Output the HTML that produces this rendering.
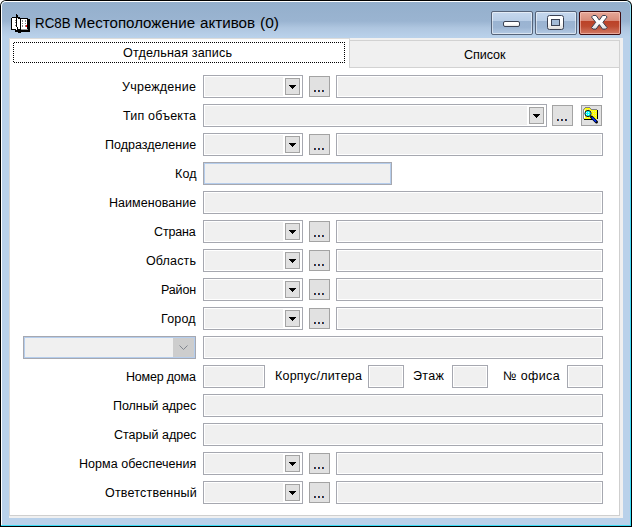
<!DOCTYPE html>
<html><head><meta charset="utf-8">
<style>
*{box-sizing:border-box}
html,body{margin:0;padding:0;width:632px;height:527px;overflow:hidden;background:#fff;font-family:"Liberation Sans",sans-serif}
#win{position:absolute;left:0;top:0;width:632px;height:527px;border-radius:6px 6px 0 0;background:#000;overflow:hidden}
#frm{position:absolute;left:1px;top:1px;width:630px;height:525px;border-radius:5px 5px 0 0;background:linear-gradient(#a0e4f6,#50d8f4 60px,#3adcf6);}
#frm2{position:absolute;left:0;top:0;width:629px;height:524px;border-radius:5px 5px 0 0;background:#fff}
#frm3{position:absolute;left:1px;top:1px;width:628px;height:523px;border-radius:4px 4px 0 0;background:linear-gradient(#94afcc 0px,#9ab4d1 19px,#afc6e0 26px,#b9d1ea 35px,#b9d1ea 100%)}
.ttl{position:absolute;top:14px;font-size:15.5px;color:#000;white-space:nowrap;transform-origin:0 0}
.tb{position:absolute;top:11px;width:42px;height:24px;border:1px solid #56647a;border-radius:2px;background:linear-gradient(#c6d8ee 0%,#b8cde6 41%,#9ab3d1 42%,#9cb5d3 70%,#b4cae4 100%);box-shadow:inset 0 0 0 1px rgba(255,255,255,0.5)}
.tbc{border-color:#3f0c10;background:linear-gradient(#e6a898 0%,#d88a78 41%,#bb4228 42%,#bd4a30 65%,#d27a66 100%);box-shadow:inset 0 0 0 1px rgba(255,210,200,0.55)}
#client{position:absolute;left:9px;top:38px;width:614px;height:480px;background:#f0f0f0}
#page{position:absolute;left:10px;top:68px;width:610px;height:448px;background:#fff;border-right:1px solid #cfcfcf;border-bottom:1px solid #cfcfcf}
#tab1{position:absolute;left:10px;top:39px;width:339px;height:30px;background:#fff}
#tab2{position:absolute;left:349px;top:40px;width:271px;height:28px;background:#f0f0f0;border:1px solid #d2d2d2}
.fh{position:absolute;height:1px;background:repeating-linear-gradient(to right,transparent 0 1px,#000 1px 2px)}
.fv{position:absolute;width:1px;background:repeating-linear-gradient(to bottom,transparent 0 1px,#000 1px 2px)}
.tt{position:absolute;font-size:12.6px;white-space:nowrap;color:#000}
.lb{position:absolute;font-size:12.5px;line-height:15px;padding-top:5px;height:23px;white-space:nowrap;color:#000}
.lbi{position:absolute;font-size:12.5px;line-height:15px;padding-top:4px;height:23px;white-space:nowrap;color:#000}
.ed{position:absolute;height:23px;border:1px solid #a6a8b0;background:#f0f0f0;box-shadow:inset 0 0 0 1px #fff}
.cb{position:absolute;height:23px;border:1px solid #a6a8b0;background:#fff}
.ebl{box-shadow:inset 0 0 0 1px #b5cdec}
.cbf{position:absolute;left:1px;top:1px;height:19px;background:#f0f0f0}
.cbb{position:absolute;right:2px;top:2px;width:15px;height:17px;border:1px solid #a3a3a3;background:#e1e1e1}
.cbb i{position:absolute;left:3px;top:6px;width:0;height:0;border-left:3.5px solid transparent;border-right:3.5px solid transparent;border-top:4px solid #000}
.db{position:absolute;width:21px;height:21px;border:1px solid #a3a3a3;background:#e1e1e1}
.dt{position:absolute;top:13px;width:2px;height:2px;background:linear-gradient(to right,#6a2a08 0 1px,#0a4a9a 1px 2px)}
.dcb{position:absolute;left:149px;top:1px;width:21px;height:19px;background:#cdcdcd}
</style></head><body>
<div id="win"><div id="frm"><div id="frm2"><div id="frm3"></div></div></div></div>
<div class="ttl" style="left:35px;transform:scaleX(0.86)">RC8B</div><div class="ttl" style="left:74px;transform:scaleX(0.975)">Местоположение</div><div class="ttl" style="left:200px;transform:scaleX(0.98)">активов</div><div class="ttl" style="left:260px">(0)</div>
<div class="tb" style="left:491px"><svg width="42" height="24" style="position:absolute;left:-1px;top:-1px"><rect x="12.5" y="10.5" width="16" height="5" rx="1.5" fill="url(#wg)" stroke="#3b4254"/></svg></div>
<div class="tb" style="left:535px"><svg width="42" height="24" style="position:absolute;left:-1px;top:-1px"><defs><linearGradient id="wg" x1="0" y1="0" x2="0" y2="1"><stop offset="0" stop-color="#fff"/><stop offset="0.5" stop-color="#fff"/><stop offset="1" stop-color="#dcdcdc"/></linearGradient></defs><rect x="12.5" y="4.5" width="16" height="14" rx="2" fill="url(#wg)" stroke="#3b4254"/><rect x="16.5" y="8.5" width="8" height="6" fill="#a3bbd7" stroke="#3b4254"/></svg></div>
<div class="tb tbc" style="left:579px"><svg width="42" height="24" style="position:absolute;left:-1px;top:-1px"><polygon transform="translate(12.5,4.5)" points="0,1.5 1.5,0 4.6,0 7.8,4.6 11,0 14.1,0 15.6,1.5 11.4,6.8 15.6,12.1 14.1,13.6 11,13.6 7.8,9.1 4.6,13.6 1.5,13.6 0,12.1 4.2,6.8" fill="url(#wg)" stroke="#3b3f50" stroke-linejoin="round"/></svg></div>
<svg id="icon" width="19" height="19" style="position:absolute;left:11px;top:14px" shape-rendering="crispEdges"><rect x="5" y="0" width="1" height="1" fill="#000"/><rect x="5" y="1" width="2" height="1" fill="#000"/><rect x="5" y="2" width="2" height="1" fill="#000"/><rect x="1" y="3" width="8" height="1" fill="#000"/><rect x="0" y="4" width="1" height="1" fill="#000"/><rect x="1" y="4" width="4" height="1" fill="#fff"/><rect x="5" y="4" width="1" height="1" fill="#000"/><rect x="6" y="4" width="1" height="1" fill="#fff"/><rect x="7" y="4" width="10" height="1" fill="#000"/><rect x="0" y="5" width="1" height="1" fill="#000"/><rect x="1" y="5" width="4" height="1" fill="#fff"/><rect x="5" y="5" width="1" height="1" fill="#000"/><rect x="6" y="5" width="3" height="1" fill="#fff"/><rect x="9" y="5" width="1" height="1" fill="#000"/><rect x="10" y="5" width="6" height="1" fill="#fff"/><rect x="16" y="5" width="3" height="1" fill="#000"/><rect x="0" y="6" width="1" height="1" fill="#000"/><rect x="1" y="6" width="3" height="1" fill="#fff"/><rect x="4" y="6" width="1" height="1" fill="#808080"/><rect x="5" y="6" width="1" height="1" fill="#000"/><rect x="6" y="6" width="3" height="1" fill="#fff"/><rect x="9" y="6" width="1" height="1" fill="#000"/><rect x="10" y="6" width="1" height="1" fill="#fff"/><rect x="11" y="6" width="1" height="1" fill="#808080"/><rect x="12" y="6" width="2" height="1" fill="#fff"/><rect x="14" y="6" width="1" height="1" fill="#808080"/><rect x="15" y="6" width="1" height="1" fill="#fff"/><rect x="16" y="6" width="3" height="1" fill="#000"/><rect x="0" y="7" width="1" height="1" fill="#000"/><rect x="1" y="7" width="4" height="1" fill="#fff"/><rect x="5" y="7" width="1" height="1" fill="#000"/><rect x="6" y="7" width="3" height="1" fill="#fff"/><rect x="9" y="7" width="1" height="1" fill="#000"/><rect x="10" y="7" width="1" height="1" fill="#fff"/><rect x="11" y="7" width="1" height="1" fill="#808080"/><rect x="12" y="7" width="2" height="1" fill="#fff"/><rect x="14" y="7" width="1" height="1" fill="#808080"/><rect x="15" y="7" width="1" height="1" fill="#fff"/><rect x="16" y="7" width="3" height="1" fill="#000"/><rect x="0" y="8" width="1" height="1" fill="#000"/><rect x="1" y="8" width="3" height="1" fill="#fff"/><rect x="4" y="8" width="1" height="1" fill="#808080"/><rect x="5" y="8" width="1" height="1" fill="#000"/><rect x="6" y="8" width="3" height="1" fill="#fff"/><rect x="9" y="8" width="1" height="1" fill="#000"/><rect x="10" y="8" width="6" height="1" fill="#fff"/><rect x="16" y="8" width="3" height="1" fill="#000"/><rect x="0" y="9" width="1" height="1" fill="#000"/><rect x="1" y="9" width="4" height="1" fill="#fff"/><rect x="5" y="9" width="1" height="1" fill="#000"/><rect x="6" y="9" width="3" height="1" fill="#fff"/><rect x="9" y="9" width="1" height="1" fill="#000"/><rect x="10" y="9" width="1" height="1" fill="#fff"/><rect x="11" y="9" width="1" height="1" fill="#808080"/><rect x="12" y="9" width="2" height="1" fill="#fff"/><rect x="14" y="9" width="1" height="1" fill="#808080"/><rect x="15" y="9" width="1" height="1" fill="#fff"/><rect x="16" y="9" width="3" height="1" fill="#000"/><rect x="0" y="10" width="1" height="1" fill="#000"/><rect x="1" y="10" width="4" height="1" fill="#fff"/><rect x="5" y="10" width="1" height="1" fill="#000"/><rect x="6" y="10" width="3" height="1" fill="#fff"/><rect x="9" y="10" width="1" height="1" fill="#000"/><rect x="10" y="10" width="6" height="1" fill="#fff"/><rect x="16" y="10" width="3" height="1" fill="#000"/><rect x="0" y="11" width="1" height="1" fill="#000"/><rect x="1" y="11" width="3" height="1" fill="#fff"/><rect x="4" y="11" width="1" height="1" fill="#808080"/><rect x="5" y="11" width="1" height="1" fill="#000"/><rect x="6" y="11" width="3" height="1" fill="#fff"/><rect x="9" y="11" width="1" height="1" fill="#000"/><rect x="10" y="11" width="1" height="1" fill="#fff"/><rect x="11" y="11" width="1" height="1" fill="#808080"/><rect x="12" y="11" width="2" height="1" fill="#fff"/><rect x="14" y="11" width="1" height="1" fill="#808080"/><rect x="15" y="11" width="1" height="1" fill="#ff0000"/><rect x="16" y="11" width="3" height="1" fill="#000"/><rect x="0" y="12" width="1" height="1" fill="#000"/><rect x="1" y="12" width="4" height="1" fill="#fff"/><rect x="5" y="12" width="1" height="1" fill="#000"/><rect x="6" y="12" width="3" height="1" fill="#fff"/><rect x="9" y="12" width="1" height="1" fill="#000"/><rect x="10" y="12" width="1" height="1" fill="#fff"/><rect x="11" y="12" width="1" height="1" fill="#808080"/><rect x="12" y="12" width="2" height="1" fill="#fff"/><rect x="14" y="12" width="1" height="1" fill="#808080"/><rect x="15" y="12" width="1" height="1" fill="#ff0000"/><rect x="16" y="12" width="3" height="1" fill="#000"/><rect x="0" y="13" width="1" height="1" fill="#000"/><rect x="1" y="13" width="5" height="1" fill="#fff"/><rect x="6" y="13" width="1" height="1" fill="#000"/><rect x="7" y="13" width="2" height="1" fill="#fff"/><rect x="9" y="13" width="1" height="1" fill="#000"/><rect x="10" y="13" width="6" height="1" fill="#fff"/><rect x="16" y="13" width="3" height="1" fill="#000"/><rect x="0" y="14" width="1" height="1" fill="#000"/><rect x="1" y="14" width="5" height="1" fill="#fff"/><rect x="6" y="14" width="1" height="1" fill="#000"/><rect x="7" y="14" width="2" height="1" fill="#fff"/><rect x="9" y="14" width="1" height="1" fill="#000"/><rect x="10" y="14" width="6" height="1" fill="#fff"/><rect x="16" y="14" width="3" height="1" fill="#000"/><rect x="0" y="15" width="5" height="1" fill="#000"/><rect x="5" y="15" width="1" height="1" fill="#fff"/><rect x="6" y="15" width="4" height="1" fill="#000"/><rect x="10" y="15" width="7" height="1" fill="#909090"/><rect x="17" y="15" width="2" height="1" fill="#000"/><rect x="4" y="16" width="15" height="1" fill="#000"/><rect x="4" y="17" width="15" height="1" fill="#000"/><rect x="7" y="18" width="3" height="1" fill="#000"/></svg>
<div id="client"></div>
<div id="page"></div>
<div id="tab1"></div>
<div style="position:absolute;left:9px;top:38px;width:1px;height:478px;background:#d9d8d6"></div>
<div style="position:absolute;left:9px;top:38px;width:340px;height:1px;background:#dddcda"></div>
<div id="tab2"></div>
<div class="fh" style="left:13px;top:42px;width:332px"></div>
<div class="fh" style="left:13px;top:62px;width:332px"></div>
<div class="fv" style="left:13px;top:42px;height:21px"></div>
<div class="fv" style="left:344px;top:42px;height:21px;background:repeating-linear-gradient(to bottom,#000 0 1px,transparent 1px 2px)"></div>
<div style="position:absolute;left:349px;top:38px;width:1px;height:3px;background:#d8d8d8"></div>
<div class="tt" style="top:46px;left:123px;letter-spacing:0.15px">Отдельная запись</div>
<div class="tt" style="top:48px;left:464px;letter-spacing:-0.1px">Список</div>
<div class="lb" style="top:75px;left:122px;letter-spacing:0.25px">Учреждение</div>
<div class="cb" style="left:203px;top:75px;width:100px"><div class="cbf" style="width:78px"></div><div class="cbb"><svg width="13" height="15" style="position:absolute;left:0;top:0" shape-rendering="crispEdges"><path d="M3 6h7v1H3zM4 7h5v1H4zM5 8h3v1H5zM6 9h1v1H6z" fill="#000"/></svg></div></div>
<div class="db" style="left:309px;top:76px"><span class="dt" style="left:4px"></span><span class="dt" style="left:8px"></span><span class="dt" style="left:12px"></span></div>
<div class="ed" style="left:336px;top:75px;width:267px"></div>
<div class="lb" style="top:104px;left:123px;letter-spacing:0.2px">Тип объекта</div>
<div class="cb" style="left:203px;top:104px;width:344px"><div class="cbf" style="width:322px"></div><div class="cbb"><svg width="13" height="15" style="position:absolute;left:0;top:0" shape-rendering="crispEdges"><path d="M3 6h7v1H3zM4 7h5v1H4zM5 8h3v1H5zM6 9h1v1H6z" fill="#000"/></svg></div></div>
<div class="db" style="left:552px;top:105px"><span class="dt" style="left:4px"></span><span class="dt" style="left:8px"></span><span class="dt" style="left:12px"></span></div>
<div class="db" style="left:581px;top:105px"><svg width="21" height="21" viewBox="0 0 21 21" style="position:absolute;left:-1px;top:-1px">
<defs><pattern id="yp" width="2" height="2" patternUnits="userSpaceOnUse"><rect width="2" height="2" fill="#ffff00"/><rect x="1" y="1" width="1" height="1" fill="#e0e0a0"/></pattern>
<pattern id="cp" width="2" height="2" patternUnits="userSpaceOnUse"><rect width="2" height="2" fill="#00ffff"/><rect x="1" y="1" width="1" height="1" fill="#d0ffff"/></pattern></defs>
<rect x="0.5" y="0.5" width="20" height="20" fill="#e1e1e1" stroke="#a0a0a0"/>
<g transform="translate(1,1)" shape-rendering="crispEdges">
<rect x="3" y="1" width="5" height="1" fill="#808080"/>
<rect x="2" y="2" width="1" height="1" fill="#808080"/><rect x="8" y="2" width="1" height="1" fill="#808080"/>
<rect x="9" y="3" width="6" height="1" fill="#808080"/>
<rect x="1" y="3" width="1" height="10" fill="#909090"/>
<rect x="3" y="2" width="5" height="1" fill="url(#yp)"/>
<rect x="2" y="3" width="7" height="1" fill="url(#yp)"/>
<rect x="2" y="4" width="13" height="9" fill="url(#yp)"/>
<rect x="2" y="4" width="1" height="8" fill="#fff"/>
<rect x="15" y="4" width="1" height="9" fill="#000"/>
<rect x="2" y="13" width="9" height="1" fill="#000"/>
</g>
<circle cx="7" cy="8.5" r="3.1" fill="url(#cp)" stroke="#101010" stroke-width="1"/>
<path d="M10.5 12l5 5" stroke="#000" stroke-width="3" stroke-linecap="round"/>
<path d="M10.7 12.2l4.5 4.5" stroke="#0030ff" stroke-width="1.6"/>
</svg></div>
<div class="lb" style="top:133px;left:105px;letter-spacing:0.0px">Подразделение</div>
<div class="cb" style="left:203px;top:133px;width:100px"><div class="cbf" style="width:78px"></div><div class="cbb"><svg width="13" height="15" style="position:absolute;left:0;top:0" shape-rendering="crispEdges"><path d="M3 6h7v1H3zM4 7h5v1H4zM5 8h3v1H5zM6 9h1v1H6z" fill="#000"/></svg></div></div>
<div class="db" style="left:309px;top:134px"><span class="dt" style="left:4px"></span><span class="dt" style="left:8px"></span><span class="dt" style="left:12px"></span></div>
<div class="ed" style="left:336px;top:133px;width:267px"></div>
<div class="lb" style="top:162px;left:175px;letter-spacing:0.1px">Код</div>
<div class="ed ebl" style="left:203px;top:162px;width:189px"></div>
<div class="lb" style="top:191px;left:109px;letter-spacing:0.05px">Наименование</div>
<div class="ed" style="left:203px;top:191px;width:400px"></div>
<div class="lb" style="top:220px;left:154px;letter-spacing:-0.15px">Страна</div>
<div class="cb" style="left:203px;top:220px;width:100px"><div class="cbf" style="width:78px"></div><div class="cbb"><svg width="13" height="15" style="position:absolute;left:0;top:0" shape-rendering="crispEdges"><path d="M3 6h7v1H3zM4 7h5v1H4zM5 8h3v1H5zM6 9h1v1H6z" fill="#000"/></svg></div></div>
<div class="db" style="left:309px;top:221px"><span class="dt" style="left:4px"></span><span class="dt" style="left:8px"></span><span class="dt" style="left:12px"></span></div>
<div class="ed" style="left:336px;top:220px;width:267px"></div>
<div class="lb" style="top:249px;left:146px;letter-spacing:0.15px">Область</div>
<div class="cb" style="left:203px;top:249px;width:100px"><div class="cbf" style="width:78px"></div><div class="cbb"><svg width="13" height="15" style="position:absolute;left:0;top:0" shape-rendering="crispEdges"><path d="M3 6h7v1H3zM4 7h5v1H4zM5 8h3v1H5zM6 9h1v1H6z" fill="#000"/></svg></div></div>
<div class="db" style="left:309px;top:250px"><span class="dt" style="left:4px"></span><span class="dt" style="left:8px"></span><span class="dt" style="left:12px"></span></div>
<div class="ed" style="left:336px;top:249px;width:267px"></div>
<div class="lb" style="top:278px;left:161px;letter-spacing:-0.15px">Район</div>
<div class="cb" style="left:203px;top:278px;width:100px"><div class="cbf" style="width:78px"></div><div class="cbb"><svg width="13" height="15" style="position:absolute;left:0;top:0" shape-rendering="crispEdges"><path d="M3 6h7v1H3zM4 7h5v1H4zM5 8h3v1H5zM6 9h1v1H6z" fill="#000"/></svg></div></div>
<div class="db" style="left:309px;top:279px"><span class="dt" style="left:4px"></span><span class="dt" style="left:8px"></span><span class="dt" style="left:12px"></span></div>
<div class="ed" style="left:336px;top:278px;width:267px"></div>
<div class="lb" style="top:307px;left:161px;letter-spacing:0.2px">Город</div>
<div class="cb" style="left:203px;top:307px;width:100px"><div class="cbf" style="width:78px"></div><div class="cbb"><svg width="13" height="15" style="position:absolute;left:0;top:0" shape-rendering="crispEdges"><path d="M3 6h7v1H3zM4 7h5v1H4zM5 8h3v1H5zM6 9h1v1H6z" fill="#000"/></svg></div></div>
<div class="db" style="left:309px;top:308px"><span class="dt" style="left:4px"></span><span class="dt" style="left:8px"></span><span class="dt" style="left:12px"></span></div>
<div class="ed" style="left:336px;top:307px;width:267px"></div>
<div class="ed ebl" style="left:23px;top:336px;width:173px"><div class="dcb"><svg width="21" height="19" style="position:absolute;left:0;top:0"><polyline points="6.5,7.5 10.5,11.5 14.5,7.5" fill="none" stroke="#80858e" stroke-width="1"/></svg></div></div>
<div class="ed" style="left:203px;top:336px;width:400px"></div>
<div class="lb" style="top:365px;left:126px;letter-spacing:-0.2px">Номер дома</div>
<div class="ed" style="left:203px;top:365px;width:62px"></div>
<div class="lbi" style="top:365px;left:275px;letter-spacing:0.2px">Корпус/литера</div>
<div class="ed" style="left:368px;top:365px;width:36px"></div>
<div class="lbi" style="top:365px;left:413px;letter-spacing:0.35px">Этаж</div>
<div class="ed" style="left:452px;top:365px;width:36px"></div>
<div class="lbi" style="top:365px;left:503px;letter-spacing:0.4px">№ офиса</div>
<div class="ed" style="left:567px;top:365px;width:36px"></div>
<div class="lb" style="top:394px;left:113px;letter-spacing:-0.05px">Полный адрес</div>
<div class="ed" style="left:203px;top:394px;width:400px"></div>
<div class="lb" style="top:423px;left:114px;letter-spacing:0.0px">Старый адрес</div>
<div class="ed" style="left:203px;top:423px;width:400px"></div>
<div class="lb" style="top:452px;left:79px;letter-spacing:0.05px">Норма обеспечения</div>
<div class="cb" style="left:203px;top:452px;width:100px"><div class="cbf" style="width:78px"></div><div class="cbb"><svg width="13" height="15" style="position:absolute;left:0;top:0" shape-rendering="crispEdges"><path d="M3 6h7v1H3zM4 7h5v1H4zM5 8h3v1H5zM6 9h1v1H6z" fill="#000"/></svg></div></div>
<div class="db" style="left:309px;top:453px"><span class="dt" style="left:4px"></span><span class="dt" style="left:8px"></span><span class="dt" style="left:12px"></span></div>
<div class="ed" style="left:336px;top:452px;width:267px"></div>
<div class="lb" style="top:481px;left:105px;letter-spacing:0.2px">Ответственный</div>
<div class="cb" style="left:203px;top:481px;width:100px"><div class="cbf" style="width:78px"></div><div class="cbb"><svg width="13" height="15" style="position:absolute;left:0;top:0" shape-rendering="crispEdges"><path d="M3 6h7v1H3zM4 7h5v1H4zM5 8h3v1H5zM6 9h1v1H6z" fill="#000"/></svg></div></div>
<div class="db" style="left:309px;top:482px"><span class="dt" style="left:4px"></span><span class="dt" style="left:8px"></span><span class="dt" style="left:12px"></span></div>
<div class="ed" style="left:336px;top:481px;width:267px"></div>
</body></html>
